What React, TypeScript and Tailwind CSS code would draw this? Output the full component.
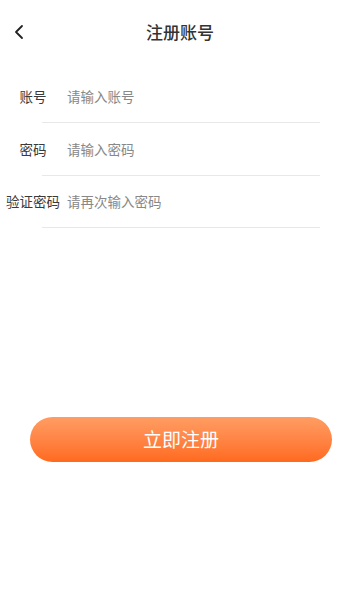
import React from "react";

const font = { fontFamily: '"Noto Sans CJK SC", "Noto Sans", sans-serif' };

function Row({ label, placeholder }: { label: string; placeholder: string }) {
  return (
    <div className="flex flex-col">
      <div className="flex h-[51.5px] items-center">
        <div className="w-[67px] shrink-0 pl-[6px] pr-[7px] text-center text-[13.5px] text-[#3a3a3a]">{label}</div>
        <input
          className="flex-1 bg-transparent text-[13.5px] text-[#333] outline-none placeholder:text-[#888]"
          placeholder={placeholder}
          style={font}
        />
      </div>
      <div className="ml-[42px] mr-[40px] h-px bg-[#e8e8e8]" />
    </div>
  );
}

export default function App() {
  return (
    <div className="flex h-[600px] w-[360px] flex-col bg-white" style={font}>
      <div className="relative flex h-[64px] items-center justify-center">
        <svg className="absolute left-[13px] top-[24px]" width="12" height="16" viewBox="0 0 12 16">
          <path d="M9 2 L3 8 L9 14" fill="none" stroke="#222" strokeWidth="1.8" strokeLinecap="round" strokeLinejoin="round" />
        </svg>
        <span className="text-[17px] font-medium text-[#333]">注册账号</span>
      </div>
      <div className="flex flex-col pt-[6.5px]">
        <Row label="账号" placeholder="请输入账号" />
        <Row label="密码" placeholder="请输入密码" />
        <Row label="验证密码" placeholder="请再次输入密码" />
      </div>
      <div className="mt-[189px] flex px-[30px] pr-[28px]">
        <button className="h-[45px] w-full rounded-full bg-gradient-to-b from-[#ff9d62] to-[#ff6a1c] text-[19px] text-white">
          立即注册
        </button>
      </div>
    </div>
  );
}
